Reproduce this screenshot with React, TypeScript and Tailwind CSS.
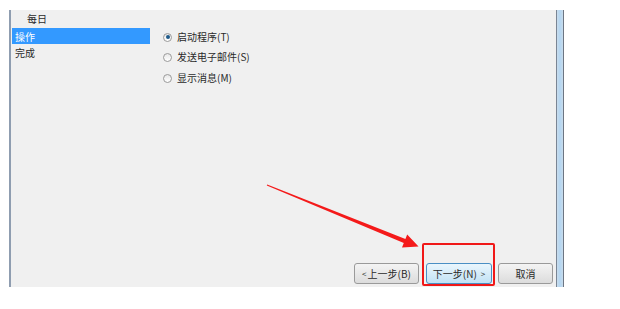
import React from "react";

const font = { fontFamily: '"Noto Sans CJK SC", "Noto Sans", sans-serif' };

function Radio({ checked, label }: { checked?: boolean; label: string }) {
  return (
    <div className="flex h-[20px] items-center">
      <span className="flex h-[9px] w-[9px] items-center justify-center rounded-full border border-[#9a9a9a] bg-gradient-to-b from-[#e8e8e8] to-[#ffffff]">
        {checked && <span className="h-[4px] w-[4px] rounded-full bg-[#1f5a8a]" />}
      </span>
      <span className="ml-[5px] text-[10px] leading-none text-[#2a2a2a]">{label}</span>
    </div>
  );
}

export default function App() {
  return (
    <div className="relative h-[309px] w-[620px] overflow-hidden bg-white" style={font}>
      <div className="ml-[9px] mt-[10px] flex h-[277px] w-[555px]">
        <div className="w-[2px] bg-[#8f9db0]" />
        <div className="flex flex-1 flex-col bg-[#f0f0f0]">
          <div className="flex flex-1">
            <div className="w-[139px] pl-[1px]">
              <div className="h-[18px] pl-[15px] pt-[2px] text-[10px] leading-[13px] text-[#2a2a2a]">每日</div>
              <div className="flex h-[16px] w-[138px] items-center bg-[#3399ff] pl-[3px] text-[10px] text-white">操作</div>
              <div className="flex h-[16px] items-center pl-[3px] text-[10px] text-[#2a2a2a]">完成</div>
            </div>
            <div className="ml-[13px] pt-[17px]">
              <Radio checked label="启动程序(T)" />
              <Radio label="发送电子邮件(S)" />
              <div className="h-[1px]" />
              <Radio label="显示消息(M)" />
            </div>
          </div>
          <div className="flex justify-end gap-[6px] pb-[3px] pr-[3px]">
            <button className="flex h-[21px] w-[65px] items-center justify-center rounded-[3px] border border-[#9a9a9a] bg-gradient-to-b from-[#f4f4f4] to-[#dcdcdc] text-[10px] text-[#2a2a2a]">
              <span className="mr-[1px] text-[8px]">&lt;</span>上一步(B)
            </button>
            <button className="ml-[1px] flex h-[21px] w-[66px] items-center justify-center rounded-[3px] border border-[#4a8fc4] bg-gradient-to-b from-[#eaf6fd] to-[#c2e2f5] text-[10px] text-[#2a2a2a]">
              下一步(N)<span className="ml-[4px] text-[8px]">&gt;</span>
            </button>
            <button className="flex h-[21px] w-[55px] items-center justify-center rounded-[3px] border border-[#9a9a9a] bg-gradient-to-b from-[#f4f4f4] to-[#dcdcdc] text-[10px] text-[#2a2a2a]">
              取消
            </button>
          </div>
        </div>
        <div className="flex w-[8px]">
          <div className="w-[1px] bg-[#7a8594]" />
          <div className="w-[6px] bg-gradient-to-r from-[#c8dcec] via-[#b4d6f2] to-[#c8dcec]" />
          <div className="w-[1px] bg-[#6d7683]" />
        </div>
      </div>
      <div className="absolute left-[422px] top-[243px] h-[43px] w-[73px] rounded-[2px] border-2 border-[#f01818]" />
      <svg className="absolute left-0 top-0" width="620" height="309" viewBox="0 0 620 309">
        <polygon
          points="267.2,184.4 405.4,238.9 407.2,234.4 418.5,246.5 402,247.4 403.8,242.9 266.8,185.6"
          fill="#f41a1a"
        />
      </svg>
    </div>
  );
}
